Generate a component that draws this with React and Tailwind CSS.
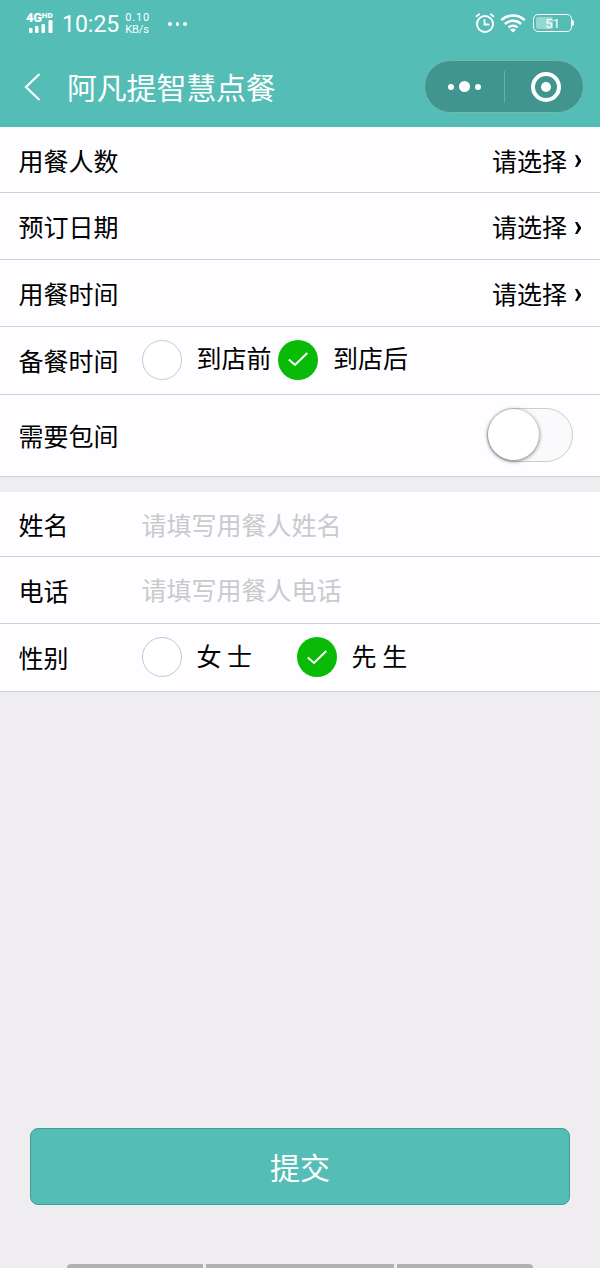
import React, { useState } from 'react';

const pickers = [
  { id: 'people', label: '用餐人数', height: 'h-[66px]' },
  { id: 'date', label: '预订日期', height: 'h-[67px]' },
  { id: 'time', label: '用餐时间', height: 'h-[67px]' },
];

const SignalIcon = () => (
  <div className="w-[30px] h-[22px] flex flex-col">
    <div className="flex items-start h-[9px] font-black text-white">
      <span className="text-[13px] leading-[9px] tracking-[-0.3px]">4G</span>
      <span className="text-[8px] leading-[5px]">HD</span>
    </div>
    <svg className="w-[30px] h-[13px] -mt-[2px]" viewBox="0 0 30 13" fill="#fff">
      <rect x="3" y="8" width="3.5" height="5" rx="1" />
      <rect x="9" y="6" width="3.5" height="7" rx="1" />
      <rect x="15.5" y="4" width="3.5" height="9" rx="1" />
      <rect x="22.5" y="0" width="4" height="13" rx="1" />
    </svg>
  </div>
);

const AlarmIcon = () => (
  <svg className="w-5 h-5" viewBox="0 0 20 20" fill="none" stroke="#fff" strokeWidth="2" strokeLinecap="round">
    <circle cx="10" cy="11" r="8" />
    <path d="M9.5 7v4.5h4M1.5 3.2 4.2 1.2M18.5 3.2 15.8 1.2" strokeWidth="1.8" />
  </svg>
);

const WifiIcon = () => (
  <svg className="w-[26px] h-[19px]" viewBox="0 0 26 19" fill="none" stroke="#fff" strokeWidth="2.5">
    <path d="M1.3 6.2a17 17 0 0 1 23.4 0" />
    <path d="M4.9 10a12 12 0 0 1 16.2 0" />
    <path d="M8.5 13.4a7 7 0 0 1 9 0" />
    <path d="M13 18.5 10 15.7a4.6 4.6 0 0 1 6 0z" fill="#fff" stroke="none" />
  </svg>
);

const Battery = () => (
  <div className="flex items-center">
    <div className="relative w-[39px] h-[18px] rounded-[5px] border border-white p-[2px]">
      <div className="w-[17px] h-full rounded-[2px] bg-white/40" />
      <span className="absolute inset-0 text-center text-[13.5px] leading-[17px] text-white">51</span>
    </div>
    <div className="w-[2px] h-[6px] rounded-r bg-white" />
  </div>
);

const StatusBar = () => (
  <div className="h-12 flex items-start text-white font-['Roboto',sans-serif]">
    <div className="ml-[26px] mt-[13px]">
      <SignalIcon />
    </div>
    <span className="ml-[6px] mt-[12px] text-[23px] leading-[26px]">10:25</span>
    <div className="ml-[6px] mt-[12px] w-[26px] flex flex-col text-[11px] leading-[12px]">
      <span className="tracking-[0.8px]">0.10</span>
      <span className="tracking-[-0.1px]">KB/s</span>
    </div>
    <div className="ml-[17px] mt-[22px] flex gap-[4px]">
      <i className="w-[3.5px] h-[3.5px] rounded-full bg-white" />
      <i className="w-[3.5px] h-[3.5px] rounded-full bg-white" />
      <i className="w-[3.5px] h-[3.5px] rounded-full bg-white" />
    </div>
    <div className="ml-auto mr-[26px] mt-[13px] flex items-center">
      <AlarmIcon />
      <div className="ml-[5px] mr-[7px]">
        <WifiIcon />
      </div>
      <Battery />
    </div>
  </div>
);

const NavBar = () => (
  <div className="h-[78px] flex items-center pl-6 pr-4">
    <svg className="w-[17px] h-7" viewBox="0 0 17 28" fill="none" stroke="#fff" strokeWidth="2.2">
      <path d="M15.5 1 2 14l13.5 13" />
    </svg>
    <h1 className="ml-[26px] -mt-[2px] text-[30px] leading-[40px] font-normal tracking-[-0.2px] text-white">阿凡提智慧点餐</h1>
    <div className="ml-auto -mt-px w-[160px] h-[53px] rounded-full border border-[#76b7b1] bg-[#40968f] flex items-center">
      <div className="w-[79px] flex items-center justify-center gap-[5px]">
        <i className="w-[6px] h-[6px] rounded-full bg-white" />
        <i className="w-[11px] h-[11px] rounded-full bg-white" />
        <i className="w-[6px] h-[6px] rounded-full bg-white" />
      </div>
      <div className="w-px h-8 bg-[#6cafa9]" />
      <div className="flex-1 pl-[3px] flex justify-center">
        <div className="w-[30px] h-[30px] rounded-full border-4 border-white flex items-center justify-center">
          <i className="w-[10px] h-[10px] rounded-full bg-white" />
        </div>
      </div>
    </div>
  </div>
);

const Row = ({ label, height, children }) => (
  <div className={`${height} flex items-center pl-[18.5px] border-b border-[#d0cfd2]`}>
    <span className="w-[123px] shrink-0 leading-8">{label}</span>
    {children}
  </div>
);

const Radio = ({ checked, onClick, children }) => (
  <button type="button" onClick={onClick} className="flex items-center">
    {checked ? (
      <span className="w-10 h-10 rounded-full bg-[#09bb07] flex items-center justify-center">
        <svg className="w-5 h-[15px]" viewBox="0 0 20 15" fill="none" stroke="#fff" strokeWidth="2">
          <path d="M.8 7.5 7 13 19.3 1" />
        </svg>
      </span>
    ) : (
      <span className="w-10 h-10 rounded-full border-[1.5px] border-[#c8c7c9] bg-white" />
    )}
    <span className="ml-[15px] -mt-[5px] leading-8 whitespace-pre">{children}</span>
  </button>
);

const App = () => {
  const [prepare, setPrepare] = useState('after');
  const [gender, setGender] = useState('male');
  const [room, setRoom] = useState(false);
  const [form, setForm] = useState({ name: '', phone: '' });

  return (
    <div className="w-[600px] h-[1268px] overflow-hidden flex flex-col bg-[#efedf0] text-black text-[25px] font-['Noto_Sans_CJK_SC',sans-serif]">
      <header className="h-[127px] bg-[#53bdb6] shrink-0">
        <StatusBar />
        <NavBar />
      </header>

      <section className="bg-[#fefdff]">
        {pickers.map((item) => (
          <Row key={item.id} label={item.label} height={item.height}>
            <div className="ml-auto mr-[18px] flex items-center">
              <span className="leading-8">请选择</span>
              <svg className="ml-[7px] mt-[3px] w-2 h-[14px]" viewBox="0 0 8 14" fill="#000">
                <path d="M1 1H3.3L7 6.2V7.8L3.3 13H1L4 7z" />
              </svg>
            </div>
          </Row>
        ))}
        <Row label="备餐时间" height="h-[68px] pb-[2px]">
          <Radio checked={prepare === 'before'} onClick={() => setPrepare('before')}>到店前</Radio>
          <div className="ml-[6.5px]">
            <Radio checked={prepare === 'after'} onClick={() => setPrepare('after')}>到店后</Radio>
          </div>
        </Row>
        <Row label="需要包间" height="h-[82px] pb-px">
          <button
            type="button"
            onClick={() => setRoom(!room)}
            className={`ml-auto mr-[27px] w-[86px] h-[54px] rounded-full border-[1.5px] border-[#c6d2c6] flex ${room ? 'bg-[#09bb07] justify-end' : 'bg-[#faf9fb]'}`}
          >
            <span className="w-[51px] h-[51px] rounded-full bg-white shadow-[0_1px_4px_rgba(0,0,0,0.55)]" />
          </button>
        </Row>
      </section>

      <section className="mt-[15px] bg-[#fefdff]">
        <Row label="姓名" height="h-[65px]">
          <input
            className="w-[400px] h-10 outline-none placeholder:text-[#cac9cc]"
            placeholder="请填写用餐人姓名"
            value={form.name}
            onChange={(e) => setForm({ ...form, name: e.target.value })}
          />
        </Row>
        <Row label="电话" height="h-[67px]">
          <input
            className="w-[400px] h-10 -mt-[3px] outline-none placeholder:text-[#cac9cc]"
            placeholder="请填写用餐人电话"
            value={form.phone}
            onChange={(e) => setForm({ ...form, phone: e.target.value })}
          />
        </Row>
        <Row label="性别" height="h-[68px] pb-px">
          <Radio checked={gender === 'female'} onClick={() => setGender('female')}>女 士</Radio>
          <div className="ml-[44.5px]">
            <Radio checked={gender === 'male'} onClick={() => setGender('male')}>先 生</Radio>
          </div>
        </Row>
      </section>

      <div className="mt-auto px-[30px]">
        <button type="button" className="w-full h-[77px] rounded-lg border border-[#469d97] bg-[#53bdb6] text-white text-[30px]">
          提交
        </button>
      </div>
      <div className="mt-[59px] h-1 shrink-0 flex justify-center gap-[3px]">
        <div className="w-[136px] bg-[#b2b1b2] rounded-tl" />
        <div className="w-[188px] bg-[#b2b1b2]" />
        <div className="w-[136px] bg-[#b2b1b2] rounded-tr" />
      </div>
    </div>
  );
};

export default App;
